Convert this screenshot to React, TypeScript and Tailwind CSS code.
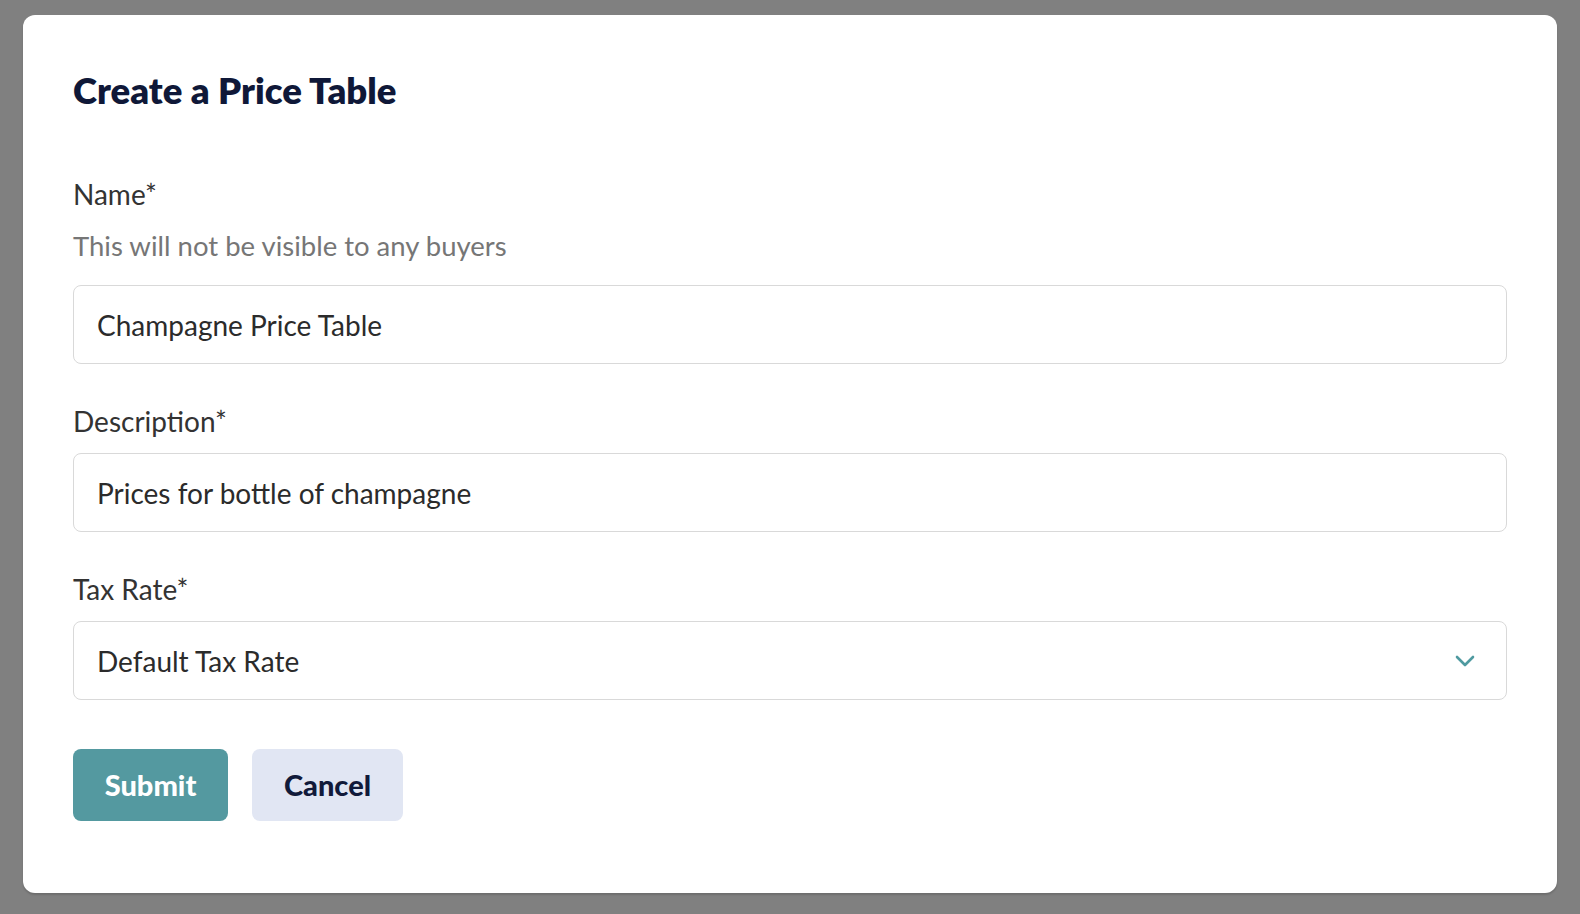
import { ChangeEvent, useState } from "react";

interface FieldProps {
  label: string;
  hint?: string;
  children: React.ReactNode;
}

function Field({ label, hint, children }: FieldProps) {
  return (
    <div className="flex flex-col">
      <label className="text-[28px] leading-[32px] text-[#333333]">{label}</label>
      {hint && (
        <p className="mt-[20px] text-[27.5px] leading-[32px] text-[#767676]">{hint}</p>
      )}
      <div className={hint ? "mt-[23px]" : "mt-[16px]"}>{children}</div>
    </div>
  );
}

const inputClass =
  "w-full h-[79px] rounded-[8px] border-[1.5px] border-[#d9d9d9] bg-white px-[23px] text-[28px] text-[#2b2b2b] outline-none";

export default function App() {
  const [name, setName] = useState("Champagne Price Table");
  const [description, setDescription] = useState("Prices for bottle of champagne");
  const [taxRate, setTaxRate] = useState("default");

  return (
    <div
      className="min-h-screen bg-[#808080] px-[23px] pt-[15px] pb-[21px]"
      style={{ fontFamily: "Lato, 'Noto Sans', sans-serif" }}
    >
      <div className="rounded-[12px] bg-white px-[50px] pt-[55px] pb-[72px] shadow-[0_2px_2px_rgba(0,0,0,0.15)]">
        {/* Header */}
        <h1 className="text-[36.5px] leading-[40px] font-extrabold text-[#0f1838]">
          Create a Price Table
        </h1>

        <div className="mt-[68px]">
          <Field label="Name*" hint="This will not be visible to any buyers">
            <input
              className={inputClass}
              value={name}
              onChange={(e: ChangeEvent<HTMLInputElement>) => setName(e.target.value)}
            />
          </Field>
        </div>

        <div className="mt-[41px]">
          <Field label="Description*">
            <input
              className={inputClass}
              value={description}
              onChange={(e: ChangeEvent<HTMLInputElement>) => setDescription(e.target.value)}
            />
          </Field>
        </div>

        <div className="mt-[41px]">
          <Field label="Tax Rate*">
            <div className="relative">
              <select
                className={inputClass + " appearance-none pr-[60px]"}
                value={taxRate}
                onChange={(e: ChangeEvent<HTMLSelectElement>) => setTaxRate(e.target.value)}
              >
                <option value="default">Default Tax Rate</option>
              </select>
              <svg
                className="pointer-events-none absolute right-[32px] top-1/2 -translate-y-1/2"
                width="20"
                height="12"
                viewBox="0 0 20 12"
                fill="none"
              >
                <path
                  d="M2 2l8 8 8-8"
                  stroke="#4f9aa0"
                  strokeWidth="2.6"
                  strokeLinecap="round"
                  strokeLinejoin="round"
                />
              </svg>
            </div>
          </Field>
        </div>

        {/* Actions */}
        <div className="mt-[49px] flex gap-[24px]">
          <button className="h-[72px] w-[155px] rounded-[8px] bg-[#5499a0] text-[29px] font-black text-white">
            Submit
          </button>
          <button className="h-[72px] w-[151px] rounded-[8px] bg-[#e1e6f3] text-[29px] font-black text-[#111a3a]">
            Cancel
          </button>
        </div>
      </div>
    </div>
  );
}
